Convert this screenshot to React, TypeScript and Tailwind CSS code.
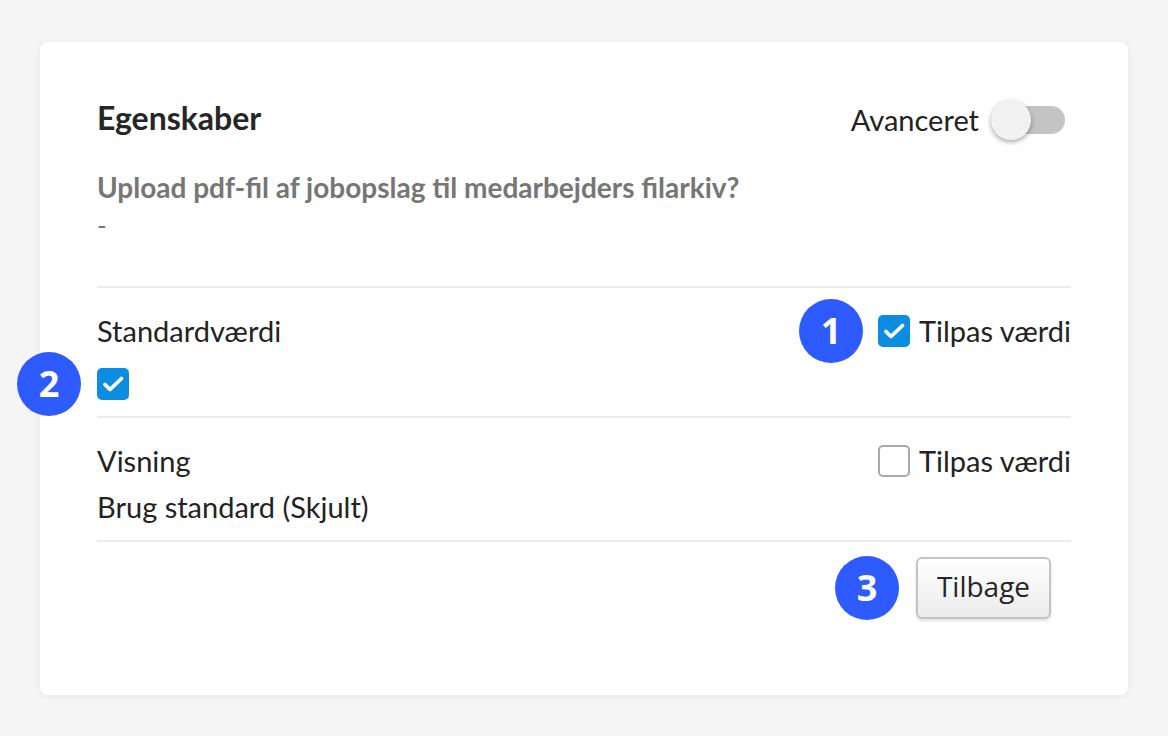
import React from "react";

const font = { fontFamily: "Lato, 'Noto Sans', sans-serif" };

function Badge({ n }: { n: string }) {
  return (
    <div className="w-[64px] h-[64px] rounded-full bg-[#2e5bff] text-white flex items-center justify-center text-[36px] font-bold leading-none font-['Open_Sans',sans-serif]">
      {n}
    </div>
  );
}

function Check({ checked }: { checked: boolean }) {
  if (checked) {
    return (
      <div className="w-[32px] h-[32px] rounded-[5px] bg-[#0b8de1] flex items-center justify-center shrink-0">
        <svg width="32" height="32" viewBox="0 0 32 32" fill="none">
          <path d="M8 16.5 L13 21.5 L24.5 10.5" stroke="white" strokeWidth="3.8" strokeLinecap="round" strokeLinejoin="round" />
        </svg>
      </div>
    );
  }
  return <div className="w-[32px] h-[32px] rounded-[5px] border-2 border-[#a9a9a9] bg-white shrink-0" />;
}

export default function App() {
  return (
    <div className="min-h-screen w-full bg-[#f5f5f5] pt-[42px] px-[40px] pb-[40px]" style={font}>
      <div className="relative bg-white rounded-[8px] shadow-[0_1px_6px_rgba(0,0,0,0.06)] h-[653px] px-[57px] pt-[56px] text-[#232323]">
        {/* Header */}
        <div className="flex items-center justify-between h-[44px]">
          <h1 className="text-[32px] font-bold text-[#262626] leading-[40px] -mt-[4px]">Egenskaber</h1>
          <div className="flex items-center gap-[14px] mr-[6px]">
            <span className="text-[29px] leading-[40px]">Avanceret</span>
            <div className="relative w-[72px] h-[28px] rounded-full bg-[#c4c4c4]">
              <div className="absolute -left-[2px] top-1/2 -translate-y-1/2 w-[40px] h-[40px] rounded-full bg-[#f1f1f1] shadow-[0_2px_5px_rgba(0,0,0,0.35)]" />
            </div>
          </div>
        </div>

        {/* Question */}
        <div className="mt-[27px] text-[28px] font-bold text-[#767676] leading-[36px]">
          Upload pdf-fil af jobopslag til medarbejders filarkiv?
        </div>
        <div className="mt-[2px] text-[26px] text-[#767676] leading-[36px]">-</div>

        {/* Section 1 */}
        <div className="mt-[43px] border-t-2 border-[#ebebeb] pt-[23px] pb-[16px] flex justify-between">
          <div className="flex flex-col">
            <span className="text-[29px] leading-[40px]">Standardværdi</span>
            <div className="relative mt-[17px]">
              <div className="absolute -left-[80px] top-1/2 -translate-y-1/2">
                <Badge n="2" />
              </div>
              <Check checked />
            </div>
          </div>
          <div className="flex items-start">
            <div className="flex items-center gap-[9px] h-[40px]">
              <div className="relative">
                <div className="absolute -left-[79px] top-1/2 -translate-y-1/2">
                  <Badge n="1" />
                </div>
                <Check checked />
              </div>
              <span className="text-[29px] leading-[40px]">Tilpas værdi</span>
            </div>
          </div>
        </div>

        {/* Section 2 */}
        <div className="border-t-2 border-[#ebebeb] pt-[23px] pb-[13px] flex justify-between">
          <div className="flex flex-col">
            <span className="text-[29px] leading-[40px]">Visning</span>
            <span className="text-[29px] leading-[40px] mt-[6px]">Brug standard (Skjult)</span>
          </div>
          <div className="flex items-start">
            <div className="flex items-center gap-[9px] h-[40px]">
              <Check checked={false} />
              <span className="text-[29px] leading-[40px]">Tilpas værdi</span>
            </div>
          </div>
        </div>

        {/* Footer */}
        <div className="border-t-2 border-[#ebebeb] pt-[15px] flex justify-end pr-[20px]">
          <div className="relative">
            <div className="absolute -left-[81px] top-1/2 -translate-y-1/2">
              <Badge n="3" />
            </div>
            <button className="w-[135px] h-[62px] rounded-[6px] border-2 border-[#c4c4c4] bg-gradient-to-b from-white to-[#ececec] shadow-[0_2px_3px_rgba(0,0,0,0.12)] text-[28px] leading-[34px] pb-[4px] text-[#262626] font-['Open_Sans',sans-serif]">
              Tilbage
            </button>
          </div>
        </div>
      </div>
    </div>
  );
}
